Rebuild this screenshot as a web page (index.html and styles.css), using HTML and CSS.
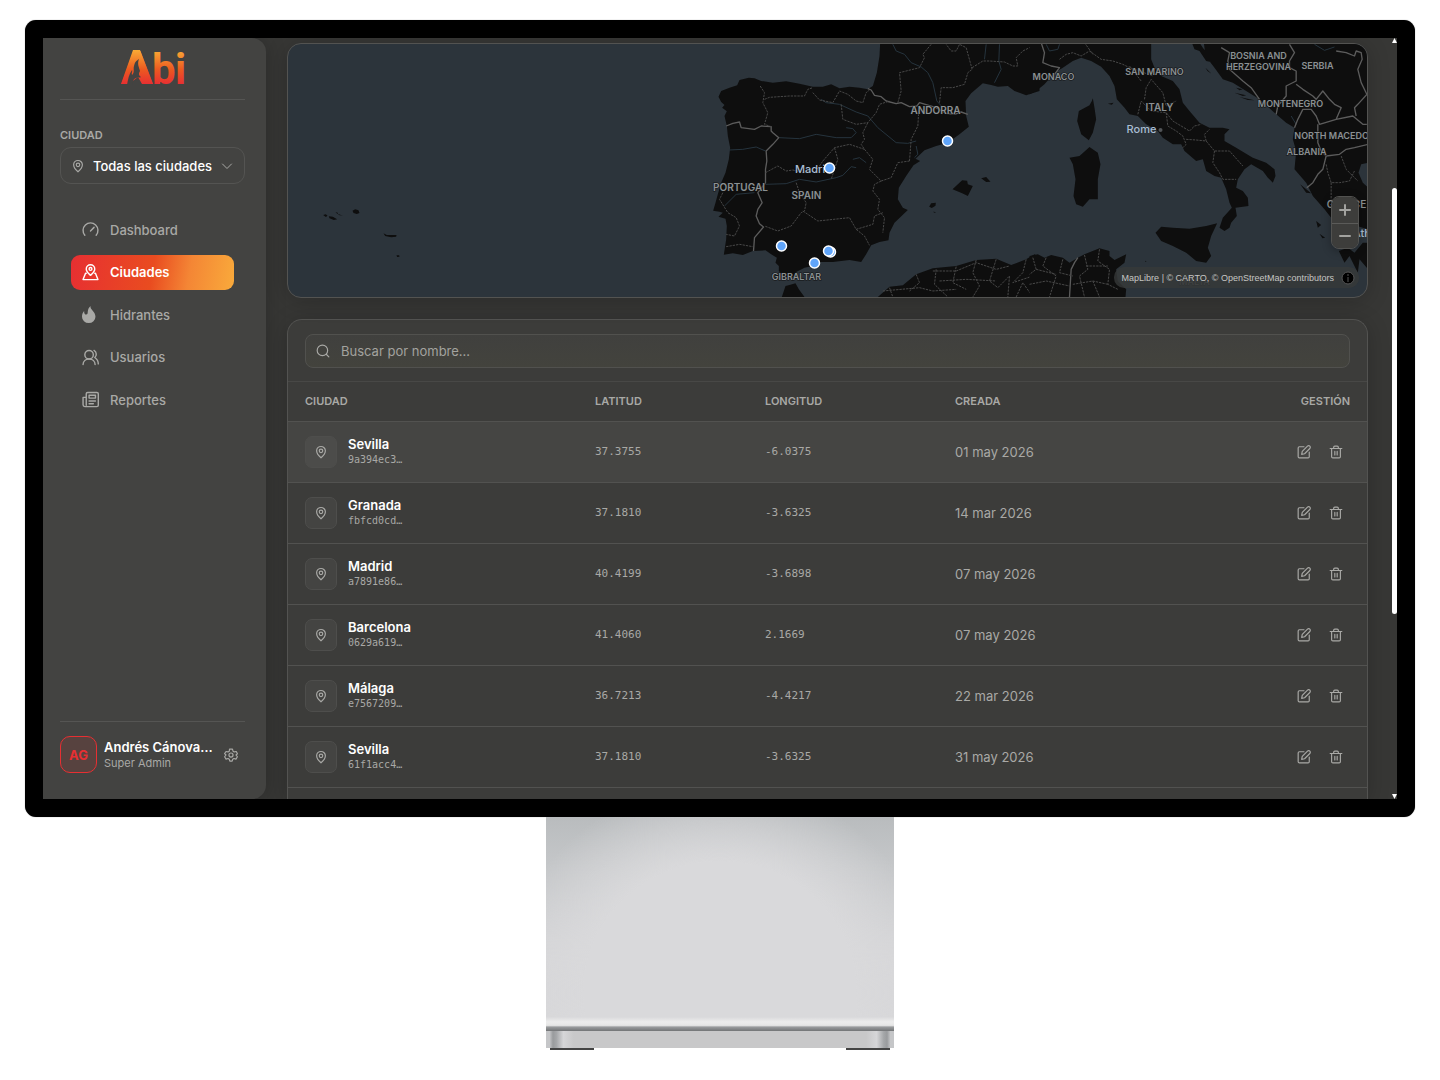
FILE: index.html
```html
<!DOCTYPE html>
<html lang="es">
<head>
<meta charset="utf-8">
<meta name="viewport" content="width=device-width, initial-scale=1">
<title>Abi – Ciudades</title>
<link rel="stylesheet" href="styles.css">
</head>
<body>
<svg class="defs" aria-hidden="true">
  <symbol id="pin" viewBox="0 0 24 24"><path d="M12 22c-1.200-1-7.500-6.200-7.500-12a7.500 7.500 0 0 1 15 0c0 5.800-6.300 11-7.500 12z"/><circle cx="12" cy="10" r="3"/></symbol>
  <symbol id="edit" viewBox="0 0 24 24"><path d="M12 3H4a2 2 0 0 0-2 2v15a2 2 0 0 0 2 2h15a2 2 0 0 0 2-2v-8"/><path d="M8 16l1-5 9-9a2.500 2.500 0 0 1 4 4l-9 9z"/></symbol>
  <symbol id="trash" viewBox="0 0 24 24"><path d="M2 6h20M4.500 6v14a2 2 0 0 0 2 2h11a2 2 0 0 0 2-2V6M8 6V4a2 2 0 0 1 2-2h4a2 2 0 0 1 2 2v2M10 11v6M14 11v6"/></symbol>
</svg>
<div class="display">
  <div class="monitor">
    <div class="screen">
      <aside class="sidebar">
        <div class="brand">
          <svg class="logo" viewBox="0 0 64 38" role="img" aria-label="Abi">
            <defs><linearGradient id="fire" gradientUnits="userSpaceOnUse" x1="0" y1="1" x2="0" y2="36"><stop offset="0" stop-color="#faab35"/><stop offset=".55" stop-color="#ec5a20"/><stop offset="1" stop-color="#e72d33"/></linearGradient></defs>
            <path d="M12 1h7l13 34H21l-4-7-9 7H0z" fill="url(#fire)"/>
            <text class="logo-text" y="35" fill="url(#fire)"><tspan class="logo-a" x="0">A</tspan><tspan x="31">b</tspan><tspan x="54">i</tspan></text>
            <path d="M6 36c1-6 2-11 5-15 1 1-1 3 0 5 3-3 1-6 2-9 1-4 2-5 5-7-2 5 0 8 1 12-1 2-2 4 1 6-1 1-3 0-5 1-3 1-3 4-4 7z" fill="#434341"/>
          </svg>
        </div>
        <div class="city-filter">
          <label class="caption" for="city">CIUDAD</label>
          <div class="select-box">
            <svg class="icon"><use href="#pin"/></svg>
            <select id="city"><option>Todas las ciudades</option></select>
            <svg class="icon chevron" viewBox="0 0 24 24"><path d="M3 8l9 9 9-9"/></svg>
          </div>
        </div>
        <nav class="nav">
          <a href="#dashboard"><svg class="nav-icon" viewBox="0 0 24 24"><path d="M4 20a10.500 10.500 0 1 1 16 0M12 14l5-5"/></svg>Dashboard</a>
          <a href="#ciudades" class="active" aria-current="page"><svg class="nav-icon" viewBox="0 0 24 24"><path d="M12 16c-2-2-6-5-6-9a6 6 0 0 1 12 0c0 4-4 7-6 9z"/><circle cx="12" cy="7" r="2"/><path d="M6 13H5L1.500 22h21L19 13h-1"/></svg>Ciudades</a>
          <a href="#hidrantes"><svg class="nav-icon solid" viewBox="0 0 24 24"><path d="M12 0c-1 5 7 8 7 15a9.500 9 0 0 1-19 0c0-3 1-6 3-8 0 4 1 5 3 5 4 0 0-7 6-12z"/></svg>Hidrantes</a>
          <a href="#usuarios"><svg class="nav-icon" viewBox="0 0 24 24"><circle cx="10" cy="8" r="6"/><path d="M1.500 22c0-5 4-8 8.500-8s8.500 3 8.500 8M17 2c4 2 4 8 1 10 3 2 5 5 5 9"/></svg>Usuarios</a>
          <a href="#reportes"><svg class="nav-icon" viewBox="0 0 24 24"><path d="M6 20V4a2 2 0 0 1 2-2h13a2 2 0 0 1 2 2v16a2 2 0 0 1-2 2H4a2.500 2.500 0 0 1-2.500-2.500V9H6v11M10 6h9v4h-9zM10 14h9M10 18h6"/></svg>Reportes</a>
        </nav>
        <div class="user">
          <span class="avatar">AG</span>
          <div class="user-text"><strong>Andrés Cánovas García</strong><span>Super Admin</span></div>
          <button class="plain" type="button" aria-label="Ajustes"><svg class="icon" viewBox="0 0 24 24"><path d="M9.500 2h5l1 3.500 2 1.200L21 6l2 4-2.500 2L23 15l-2.500 4-3.500-1-2 1.200-1 3.300H10l-1-3.300L7 18l-3.500 1L1 15l2.500-3L1 9.500 3.500 6 7 6.700l2-1.200z"/><circle cx="12" cy="12" r="3.500"/></svg></button>
        </div>
      </aside>
      <main class="content">
        <section class="map" aria-label="Mapa de ciudades">
          <svg class="map-canvas" viewBox="288 44 1080 253" preserveAspectRatio="xMidYMid slice">
            <g transform="translate(280 36) scale(.33333)" class="land">
              <path d="M131 537l8-2 5 4-5 4zM148 541l12 1 13 8-10 2-13-5zM168 528l8 3-2 3zM176 534l14 5-12-2zM219 524l8-4 10 3 3 8-8 3-10-3zM312 592l10 5 29 0-1 5-15 2-18-4zM351 658l8 0 1 4-7 1z"/>
            </g>
            <g transform="translate(690 36) scale(.33333)">
              <path class="land" d="M572 20L570 60 562 110 550 150 535 160 510 155 480 152 450 157 425 145 400 152 370 152 330 143 290 136 250 140 215 135 195 127 178 125 150 132 143 148 120 155 95 165 87 182 95 198 105 207 98 215 112 226 105 240 112 270 115 300 122 335 118 370 108 410 95 440 85 475 78 500 71 524 90 527 100 530 87 542 108 548 112 570 110 610 103 656 130 652 160 657 190 645 228 643 245 655 262 665 258 680 268 690 268 705 285 722 310 722 320 708 345 695 370 690 395 678 430 678 480 672 515 678 530 655 545 628 570 618 597 613 600 590 615 560 655 522 640 515 625 490 628 455 650 420 672 388 692 375 678 368 705 343 740 330 775 320 810 295 838 272 830 240 828 195 845 172 880 142 905 147 925 152 955 150 975 165 1010 178 1050 165V20zM277 783L288 750 300 747 318 742 328 760 345 783zM565 783L600 752 640 748 680 715 730 697 800 690 860 672 920 668 965 687 1010 670 1035 655 1050 663V783zM789 460L818 433 833 434 835 445 850 450 835 480 818 472zM875 427L890 423 903 437 890 438zM719 512L725 502 739 500 738 509 727 516zM730 527l8 1-1 3z"/>
              <path class="river" d="M610 25L620 45 645 55 665 80 695 93 715 110 730 140 742 195 760 215M395 190L410 200 450 205 500 228 535 240 565 275 620 320 655 322 680 315M270 305L330 308 380 295 440 305 485 305 500 290 490 278 470 275M120 342L160 340 200 333 228 345M228 445L290 443 330 430 380 438 440 425 460 418 485 392 500 395M930 25L928 75 935 100 915 140M105 510L140 475 195 470M890 25l-5 45M490 370l20-5 20 15M680 330l5 25-10 10"/>
              <path class="border" d="M535 158L545 162 555 178 575 182 590 195 620 203 635 200 660 212 682 210 690 200 740 215 770 232 795 235 815 228 835 235M110 270L130 262 150 258 155 275 195 280 215 270 245 272 245 285 250 290 268 305 250 325 230 345 232 375 228 400 228 440 205 470 218 500 205 520 200 540 210 563 222 573 195 605 192 645"/>
              <path class="region" d="M212 150L225 170 220 200 235 230 225 265 245 272M225 190L240 184 300 180 345 180 355 160 370 155M370 170L390 192 430 200 450 165 475 175 500 195 520 200 530 170 540 162M455 205L460 250 500 265 535 260 560 230 570 205 600 195M535 260L520 290 525 310 515 325 525 340 550 370 540 400 575 435 555 445 550 465 570 490 565 520 585 545 580 590M400 375L435 335 480 325 525 340M435 335L445 370 425 430M228 410L265 390 290 405 310 402 340 410 380 405 400 375M320 440L330 470 350 500 345 525 335 530 305 570 265 585 225 570M340 525L385 555 480 545 500 580 525 600 540 628M500 580L550 565 555 540 580 530M575 435L605 425 625 380 660 375M660 375L665 310 685 270 688 220M625 200L635 165 630 110 690 95 705 65 700 55 725 25M750 200L755 155 790 155 825 145 835 110 848 100 830 35 810 25 800 45 785 45 770 25M848 95L880 75 900 75 945 78 970 90 985 90 980 65 1000 45 1040 25M100 470L90 490 115 530 140 545 150 570 135 600 110 595M110 632L150 625 190 632M600 755L610 783M680 715L690 740 660 765M740 700L735 745 775 783M800 692L790 740 830 760M860 672L850 710 870 750 850 783M730 705L800 705 860 680 920 700 960 690M750 735L830 730 920 735M920 670L900 735 925 755 960 720 955 783M1010 670L1000 710 970 740 1045 715M980 783L1000 740 1030 783M580 765L690 755 730 765 800 760"/>
            </g>
            <g transform="translate(1030 36) scale(.33333)">
              <path class="land" d="M0 20V175L20 165 45 145 75 110 100 95 130 75 155 65 185 75 215 92 240 120 255 150 262 190 285 215 300 235 325 240 350 265 385 285 400 305 430 325 455 325 465 345 500 375 520 370 530 405 555 420 575 425 590 460 600 500 607 515 580 545 570 575 585 585 600 575 605 560 622 540 618 515 657 510 655 485 640 465 620 455 625 430 645 400 665 385 700 405 715 425 730 440 738 420 735 400 710 380 670 365 620 335 585 315 585 295 600 280 580 275 540 275 510 260 480 225 460 200 450 160 430 135 395 120 375 95 365 70V20zM523 20L528 60 555 95 580 130 610 140 650 165 690 190 735 230 770 260 795 275 790 310 800 345 795 400 830 440 850 480 885 520 905 545 950 560 1016 580V20zM487 20L495 40 510 45 530 75 555 80 520 35 510 20zM928 645L955 635 975 650 1000 620 1016 620V700L990 670 985 710 960 660 945 680zM378 590L395 572 430 575 480 578 530 570 563 562 545 600 535 635 545 660 530 680 500 675 470 650 430 630 395 615zM120 365L150 360 180 333 205 350 213 385 205 430 205 490 180 490 160 512 140 505 132 480 138 430 130 385zM190 187L195 215 200 250 190 290 178 313 155 295 143 255 148 225 180 208 187 195zM0 660L25 655 45 665 65 657 100 665 120 680 145 665 165 655 210 637 240 645 240 660 255 672 290 655 285 680 260 700 265 735 290 760 288 783H0zM620 155l20 5-10 3zM615 170l35 8-10 2zM630 183l45 10-20-1zM235 203l17-3-5 6zM812 445L845 472 830 470zM860 555l15 12-10 8zM870 593l17 12-8 2zM528 95l18 18-12-8zM347 674l4 2-3 2z"/>
              <path class="sea" d="M1016 380L995 385 987 410 1000 440 1016 455z"/>
              <path class="river" d="M50 25l10 20 25-5 5-15M855 25l30 18 30-10M785 240l15 25"/>
              <path class="border" d="M35 20L45 50 40 80 65 90 90 95 75 115M575 35L600 50 595 75 600 100 640 135 665 155 690 190M780 25L795 50 780 75 780 95 800 105 800 135 770 150 770 180 745 210 740 235M800 145L820 160 850 180 860 190 880 165 900 190 915 205 935 215 920 250 870 265 860 240 845 220 820 220 805 250 795 275M865 265L865 320 875 345 890 360 880 400 865 415 850 440 832 455M890 360L930 355 950 340 975 335 1016 325M920 250L970 240 1000 265 1012 265M920 45L950 50 975 60 980 45 995 50 998 70 985 100 995 140 1012 175 985 205 975 215 980 240M120 783L125 700 135 680 145 665"/>
              <path class="region" d="M90 70L110 55 130 50 155 60 180 45 215 70 250 75 280 85 300 95 330 105 370 120M345 190L350 155 365 130 400 170 410 210 440 195M325 235L335 195 350 210 365 225 410 230 430 255 480 285 495 270 515 265M410 230L415 270 440 285 460 300 470 325 460 335M470 310L500 312 530 315 525 295 540 280M530 315L555 345 600 345 640 390M555 345L550 380 570 410 580 430 620 430M165 20L190 55M300 90L335 135M890 385L895 410 905 440 930 440 960 435 975 405M905 440V500M935 360L950 400 985 435M10 665L20 700 0 715M50 665L40 690 80 720 60 783M100 670L90 710 130 720M20 700L80 715M165 657L175 700 150 720 165 783M210 640L205 675 240 700 235 745 265 760M170 690L235 690M130 745L190 735 235 745M190 735L210 783M0 745L50 735 120 750"/>
            </g>
            <g class="country">
              <text x="1155" y="75">SAN MARINO</text><text x="797" y="280">GIBRALTAR</text><text x="1054" y="80">MONACO</text><text x="1259" y="59">BOSNIA AND</text><text x="1259" y="70">HERZEGOVINA</text><text x="1318" y="69">SERBIA</text><text x="1291" y="107">MONTENEGRO</text><text x="1340" y="139">NORTH MACEDONIA</text><text x="1307" y="155">ALBANIA</text><text class="faint" x="1195" y="285">MALTA</text>
            </g>
            <g class="country large"><text x="741" y="191">PORTUGAL</text><text x="807" y="199">SPAIN</text><text x="936" y="114">ANDORRA</text><text x="1160" y="111">ITALY</text><text x="1347" y="208">GREECE</text></g>
            <g class="town"><text x="814" y="173">Madrid</text><text x="1142" y="133">Rome</text><text x="1372" y="237">Athens</text></g>
            <circle cx="1161" cy="130" r="2" fill="#515457"/>
            <g class="marker"><circle cx="948" cy="141" r="5"/><circle cx="830" cy="168" r="5"/><circle cx="782" cy="246" r="5"/><circle cx="831" cy="252" r="5"/><circle cx="829" cy="251" r="5"/><circle cx="815" cy="263" r="5"/></g>
          </svg>
          <div class="zoom"><button type="button" aria-label="Acercar"><svg viewBox="0 0 12 12"><path d="M6 1v10M1 6h10"/></svg></button><button type="button" aria-label="Alejar"><svg viewBox="0 0 12 12"><path d="M1 6h10"/></svg></button></div>
          <div class="credits"><span><a href="#maplibre">MapLibre</a> | <a href="#carto">© CARTO</a>, <a href="#osm">© OpenStreetMap contributors</a></span><button type="button" aria-label="Créditos"><svg viewBox="0 0 14 14"><circle cx="7" cy="7" r="6"/><path d="M7 6v5M7 3v2"/></svg></button></div>
        </section>
        <section class="panel">
          <div class="toolbar">
            <div class="search"><svg class="icon" viewBox="0 0 24 24"><circle cx="11" cy="11" r="9"/><path d="M18 18l4 4"/></svg><input type="text" aria-label="Buscar" placeholder="Buscar por nombre..."></div>
          </div>
          <table>
            <colgroup><col class="c-city"><col class="c-lat"><col class="c-lon"><col></colgroup>
            <thead><tr><th>CIUDAD</th><th>LATITUD</th><th>LONGITUD</th><th><div class="split"><span>CREADA</span><span>GESTIÓN</span></div></th></tr></thead>
            <tbody>
              <tr class="hovered"><td><div class="city"><span class="tile"><svg class="icon"><use href="#pin"/></svg></span><div><strong>Sevilla</strong><code>9a394ec3…</code></div></div></td><td class="num">37.3755</td><td class="num">-6.0375</td><td><div class="split"><span>01 may 2026</span><span class="actions"><button class="plain" type="button" aria-label="Editar"><svg class="icon"><use href="#edit"/></svg></button><button class="plain" type="button" aria-label="Eliminar"><svg class="icon"><use href="#trash"/></svg></button></span></div></td></tr>
              <tr><td><div class="city"><span class="tile"><svg class="icon"><use href="#pin"/></svg></span><div><strong>Granada</strong><code>fbfcd0cd…</code></div></div></td><td class="num">37.1810</td><td class="num">-3.6325</td><td><div class="split"><span>14 mar 2026</span><span class="actions"><button class="plain" type="button" aria-label="Editar"><svg class="icon"><use href="#edit"/></svg></button><button class="plain" type="button" aria-label="Eliminar"><svg class="icon"><use href="#trash"/></svg></button></span></div></td></tr>
              <tr><td><div class="city"><span class="tile"><svg class="icon"><use href="#pin"/></svg></span><div><strong>Madrid</strong><code>a7891e86…</code></div></div></td><td class="num">40.4199</td><td class="num">-3.6898</td><td><div class="split"><span>07 may 2026</span><span class="actions"><button class="plain" type="button" aria-label="Editar"><svg class="icon"><use href="#edit"/></svg></button><button class="plain" type="button" aria-label="Eliminar"><svg class="icon"><use href="#trash"/></svg></button></span></div></td></tr>
              <tr><td><div class="city"><span class="tile"><svg class="icon"><use href="#pin"/></svg></span><div><strong>Barcelona</strong><code>0629a619…</code></div></div></td><td class="num">41.4060</td><td class="num">2.1669</td><td><div class="split"><span>07 may 2026</span><span class="actions"><button class="plain" type="button" aria-label="Editar"><svg class="icon"><use href="#edit"/></svg></button><button class="plain" type="button" aria-label="Eliminar"><svg class="icon"><use href="#trash"/></svg></button></span></div></td></tr>
              <tr><td><div class="city"><span class="tile"><svg class="icon"><use href="#pin"/></svg></span><div><strong>Málaga</strong><code>e7567209…</code></div></div></td><td class="num">36.7213</td><td class="num">-4.4217</td><td><div class="split"><span>22 mar 2026</span><span class="actions"><button class="plain" type="button" aria-label="Editar"><svg class="icon"><use href="#edit"/></svg></button><button class="plain" type="button" aria-label="Eliminar"><svg class="icon"><use href="#trash"/></svg></button></span></div></td></tr>
              <tr><td><div class="city"><span class="tile"><svg class="icon"><use href="#pin"/></svg></span><div><strong>Sevilla</strong><code>61f1acc4…</code></div></div></td><td class="num">37.1810</td><td class="num">-3.6325</td><td><div class="split"><span>31 may 2026</span><span class="actions"><button class="plain" type="button" aria-label="Editar"><svg class="icon"><use href="#edit"/></svg></button><button class="plain" type="button" aria-label="Eliminar"><svg class="icon"><use href="#trash"/></svg></button></span></div></td></tr>
            </tbody>
          </table>
        </section>
      </main>
      <div class="scrollbar" aria-hidden="true"><i class="up"></i><i class="thumb"></i><i class="down"></i></div>
    </div>
  </div>
  <div class="stand"><div class="neck"></div><div class="lip"></div><div class="base"></div><div class="feet"><i></i><i></i></div></div>
</div>
</body>
</html>
```
FILE: styles.css
```css
* { box-sizing: border-box; }
body { margin: 0; background: #fff; color: #a9a9a6; font: 13px/20px Inter, "Open Sans", sans-serif; }
button, input, select { font: inherit; color: inherit; }
a { color: inherit; text-decoration: none; }
.defs { display: none; }
.display { padding: 20px 25px 0; }

/* Monitor */
.monitor { aspect-ratio: 1390 / 797; padding: 18px; background: #000; border-radius: 11px; box-shadow: 0 0 1px #777; }
.screen { display: flex; height: 100%; overflow: hidden; background: #373735; }
.icon { width: 14px; height: 14px; flex: none; display: block; fill: none; stroke: currentColor; stroke-width: 2; stroke-linejoin: round; stroke-linecap: round; }
.plain { padding: 0; border: 0; background: none; cursor: pointer; }

/* Sidebar */
.sidebar { flex: none; width: 223px; display: flex; flex-direction: column; padding: 0 21px 26px 17px; background: #434341; border-radius: 0 14px 14px 0; box-shadow: 0 0 20px rgba(0, 0, 0, .22); z-index: 1; }
.brand { display: flex; justify-content: center; height: 62px; padding-top: 11px; border-bottom: 1px solid #555553; }
.logo { width: 64px; height: 38px; overflow: visible; }
.logo-text { font: 700 42px Roboto, sans-serif; }
.logo-a { font-size: 47px; }
.city-filter { padding-top: 25px; }
.caption { display: block; font-size: 11px; font-weight: 600; line-height: 20px; margin-bottom: 2px; }
.select-box { display: flex; align-items: center; height: 37px; padding: 0 11px 0 10px; border: 1px solid #545452; border-radius: 11px; }
.select-box select { flex: 1; min-width: 0; margin-left: 8px; padding: 0; border: 0; background: transparent; appearance: none; color: #fff; font-weight: 500; }
.chevron { width: 12px; height: 12px; }
.nav { display: flex; flex-direction: column; justify-content: space-between; height: 205px; margin: 28px 11px 0; }
.nav a { display: flex; align-items: center; gap: 11px; height: 35px; padding-left: 11px; border-radius: 9px; font-weight: 500; }
.nav .active { color: #fff; font-weight: 600; background: linear-gradient(100deg, #e72f32, #e94c20 50%, #f48635 72%, #f9aa3b); }
.nav-icon { width: 17px; height: 17px; fill: none; stroke: currentColor; stroke-width: 2; stroke-linecap: round; stroke-linejoin: round; }
.nav-icon.solid { fill: currentColor; stroke: none; }
.user { display: flex; align-items: center; margin-top: auto; padding: 14px 7px 0 0; border-top: 1px solid #555553; }
.avatar { display: grid; place-items: center; flex: none; width: 37px; height: 37px; border: 1px solid #e72f32; border-radius: 10px; background: #57423f; color: #e72f32; font-weight: 700; }
.user-text { flex: 1; min-width: 0; margin: 0 8px 0 7px; line-height: 16px; font-size: 11px; }
.user-text strong { display: block; overflow: hidden; text-overflow: ellipsis; white-space: nowrap; color: #fff; font-size: 13px; font-weight: 600; }

/* Main column */
.content { flex: 1; min-width: 0; display: flex; flex-direction: column; gap: 21px; padding: 5px 24px 0 21px; }
.map, .panel { box-shadow: 0 3px 22px rgba(0, 0, 0, .2); border: 1px solid #535351; }
.map { position: relative; flex: none; height: 255px; overflow: hidden; border-radius: 14px; background: #2c343b; }
.map-canvas { display: block; width: 100%; height: 100%; }
.land { fill: #0e0e0e; }
.sea { fill: #2c343b; }
.river { fill: none; stroke: #26343e; stroke-width: 3; }
.border { fill: none; stroke: #5c5c5c; stroke-width: 4; stroke-linejoin: round; }
.region { fill: none; stroke: #484848; stroke-width: 3; stroke-dasharray: 7 3; }
.country { fill: #8b9093; font-size: 9px; font-weight: 600; text-anchor: middle; paint-order: stroke; stroke: #111; stroke-width: 1px; }
.country.large { font-size: 10px; }
.faint { fill: #5b5e60; }
.town { fill: #a9bdd3; font-size: 11px; font-weight: 500; text-anchor: middle; }
.marker { fill: #60a5fa; stroke: #fff; stroke-width: 1.500px; }
.zoom { position: absolute; right: 8px; top: 152px; width: 28px; border: 1px solid #525250; border-radius: 8px; overflow: hidden; box-shadow: 0 2px 10px rgba(0, 0, 0, .3); }
.zoom button { display: grid; place-items: center; width: 100%; height: 26px; padding: 0; border: 0; background: #3d3d3b; color: #a2a29f; }
.zoom button + button { border-top: 1px solid #5b5b59; height: 25px; }
.zoom svg { width: 12px; height: 12px; stroke: currentColor; stroke-width: 2; stroke-linecap: round; }
.credits { position: absolute; right: 8px; bottom: 9px; display: flex; align-items: center; gap: 7px; height: 21px; padding: 0 4px 0 8px; border-radius: 10px; background: rgba(55, 58, 58, .8); color: #c6c6c3; font: 9px/20px "Liberation Sans", Arial, sans-serif; }
.credits button { padding: 0; border: 0; background: none; display: flex; }
.credits svg { width: 14px; height: 14px; fill: #000; stroke: #555; stroke-width: 1; }

.panel { flex: 1 0 auto; border-bottom: 0; border-radius: 15px 15px 0 0; background: #3c3c3a; }
.toolbar { padding: 14px 17px 13px; border-bottom: 1px solid #484846; }
.search { display: flex; align-items: center; height: 34px; padding: 0 11px 0 10px; border: 1px solid #51514e; border-radius: 8px; background: linear-gradient(#40403e, #43433d); }
.search input { flex: 1; min-width: 0; margin-left: 11px; padding: 0; border: 0; outline: 0; background: none; }
.search input::placeholder { color: #a3a39f; opacity: 1; }
table { width: 100%; table-layout: fixed; border-collapse: collapse; }
.c-city { width: 290px; }
.c-lat { width: 170px; }
.c-lon { width: 190px; }
th, td { padding: 0 17px; text-align: left; border-bottom: 1px solid #525250; }
th { height: 39px; font-size: 11px; font-weight: 600; }
td { height: 61px; }
.hovered { background: #454543; }
.split, .city { display: flex; align-items: center; justify-content: space-between; }
.city { justify-content: flex-start; gap: 11px; line-height: 16px; }
.city strong { display: block; color: #fff; font-weight: 600; }
.city code { display: block; font: 10px/15px "DejaVu Sans Mono", monospace; }
.tile { display: grid; place-items: center; width: 32px; height: 32px; border: 1px solid #4e4e4c; border-radius: 7px; background: #444442; }
.hovered .tile { background: #4c4c4a; }
.num { font: 11px/20px "DejaVu Sans Mono", monospace; }
.actions { display: flex; gap: 18px; padding-right: 7px; }

.scrollbar { flex: none; width: 5px; display: flex; flex-direction: column; align-items: center; }
.thumb { flex: 0 0 56%; width: 5px; margin-top: 145px; border-radius: 3px; background: #fff; }
.up, .down { width: 5px; height: 5px; background: #fff; clip-path: polygon(50% 0, 100% 100%, 0 100%); }
.down { margin-top: auto; clip-path: polygon(0 0, 100% 0, 50% 100%); }

/* Stand */
.stand { width: 25%; margin: 0 auto; }
.neck { aspect-ratio: 347 / 200; background: radial-gradient(ellipse 56% 94% at 50% 88%, #d9d9db 70%, rgba(217, 217, 219, 0) 112%), linear-gradient(#b9bcbe, #c5c7c9 25%, #d6d6d8 70%); }
.lip { height: 14px; background: linear-gradient(#d9d9db, #ededed 35%, #e6e6e6 60%, #999b9d 72%, #727476); }
.base { height: 17px; background: linear-gradient(90deg, #c5c6c8 1%, #999b9d 2%, #a5a7a9 3%, #d6d6d8 5%, #c8c8c9 8%, #c8c8c9 92%, #d6d6d8 95%, #a5a7a9 97%, #999b9d 98%, #c5c6c8 99%); }
.feet { display: flex; justify-content: space-between; padding: 0 4px; }
.feet i { width: 13%; height: 2px; background: #444; }
```
